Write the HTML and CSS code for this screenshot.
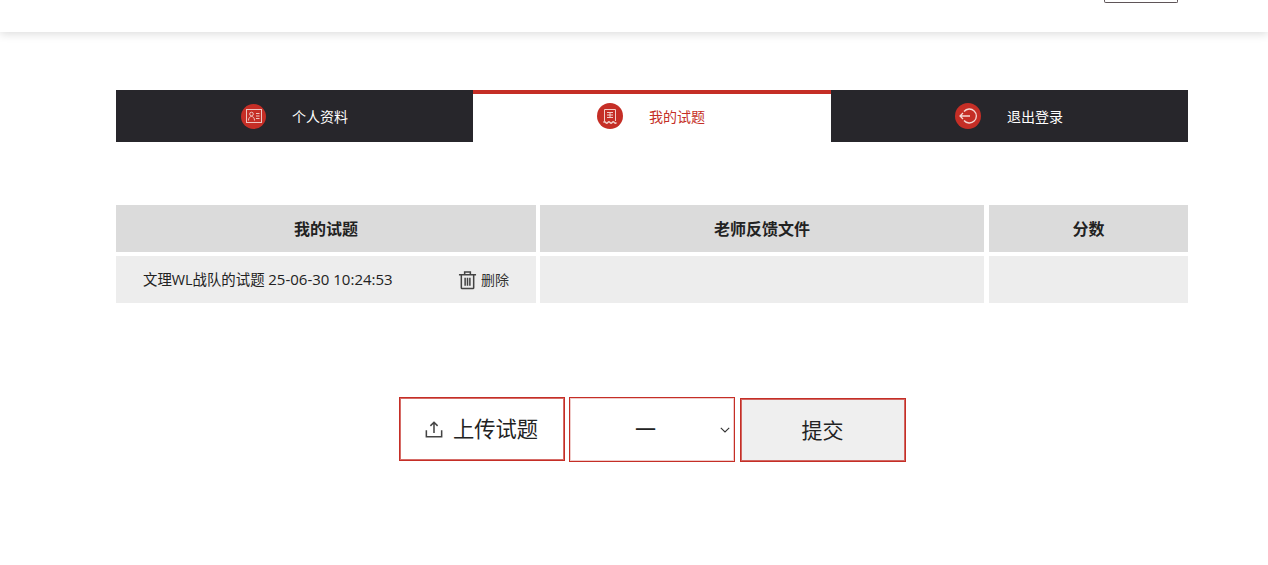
FILE: index.html
```html
<!DOCTYPE html>
<html lang="zh-CN">
<head>
<meta charset="utf-8">
<title>我的试题</title>
<link rel="stylesheet" href="styles.css">
</head>
<body>
<header class="topbar"><span class="top-btn"></span></header>
<main class="content">
  <nav class="tabs">
    <a class="tab">
      <span class="tab-icon"><svg viewBox="0 0 24 24" width="24" height="24"><g fill="none" stroke="#eec4bf" stroke-width="1"><rect x="4.500" y="5.500" width="15" height="13"/><circle cx="9.500" cy="10" r="1.800"/><path d="M6.500 16.500c0-2.500 1.200-4 3-4s3 1.500 3 4M14 9.500h3.500M14 12h3.500M14 14.500h3.500"/></g></svg></span>
      <span class="tab-label">个人资料</span>
    </a>
    <a class="tab tab-active">
      <span class="tab-icon tab-icon-big"><svg viewBox="0 0 26 26" width="26" height="26"><g fill="none" stroke="#f2cfca" stroke-width="1"><path d="M7.500 18V6.500h11V18M10 9.500h6M10 12h6M10 14.500h6M13 9.500v5"/><path d="M6.500 19.500q1.080-1.500 2.160 0t2.160 0 2.160 0 2.160 0 2.160 0 2.160 0" stroke-width="1.300"/></g></svg></span>
      <span class="tab-label">我的试题</span>
    </a>
    <a class="tab tab-last">
      <span class="tab-icon tab-icon-big"><svg viewBox="0 0 26 26" width="26" height="26"><g fill="none" stroke="#f5d9d5" stroke-width="1.300"><path d="M9 8.500a7 7 0 1 1 0 9"/><path d="M5 13h10M8 10l-3 3 3 3"/></g></svg></span>
      <span class="tab-label">退出登录</span>
    </a>
  </nav>

  <table class="grid">
    <colgroup><col class="col-a"><col class="col-b"><col class="col-c"></colgroup>
    <thead>
      <tr><th>我的试题</th><th>老师反馈文件</th><th class="cell-last">分数</th></tr>
    </thead>
    <tbody>
      <tr>
        <td>
          <div class="file-row">
            <span class="file-name">文理WL战队的试题 <span class="file-date">25-06-30 10:24:53</span></span>
            <a class="del">
              <svg viewBox="0 0 20 20" width="19" height="20"><g fill="none" stroke="#444" stroke-width="1.600"><path d="M1 4.500h18M7 4.500V1.500h6v3M3.500 4.500v13.700a.8.8 0 0 0 .8.8h11.400a.8.800 0 0 0 .8-.8V4.500M7.500 7.500v8.500M10 7.500v8.500M12.500 7.500v8.500"/></g></svg>
              <span class="del-label">删除</span>
            </a>
          </div>
        </td>
        <td></td>
        <td class="cell-last"></td>
      </tr>
    </tbody>
  </table>

  <div class="actions">
    <label class="btn btn-upload">
      <svg viewBox="0 0 20 20" width="18" height="18"><g fill="none" stroke="#444" stroke-width="1.700"><path d="M1.500 11.500v7h17v-7M10 14.500V2.500M6 6.500l4-4 4 4"/></g></svg>
      <span class="upload-label">上传试题</span>
    </label>
    <div class="btn btn-select">
      <span class="select-value">一</span>
      <svg class="chev" viewBox="0 0 10 6" width="10" height="6"><path d="M.8.800 5 5 9.200.800" fill="none" stroke="#333" stroke-width="1.100"/></svg>
    </div>
    <button class="btn btn-submit" type="button">提交</button>
  </div>
</main>
</body>
</html>
```
FILE: styles.css
```css
* { box-sizing: border-box; }
html, body { margin: 0; padding: 0; }
body {
  background: #fff;
  color: #222;
  font-family: "Open Sans", "Noto Sans CJK SC", sans-serif;
  font-size: 14px;
  height: 565px;
  overflow: hidden;
}
.topbar {
  height: 32px;
  display: flex;
  justify-content: flex-end;
  align-items: flex-start;
  padding-right: 90px;
  background: #fff;
  box-shadow: 0 2px 10px rgba(0, 0, 0, 0.14);
}
.top-btn {
  width: 74px;
  height: 3px;
  border: 1px solid #5f5558;
  border-top: 0;
  border-radius: 0 0 2px 2px;
}
.content {
  width: 1072px;
  margin: 58px 0 0 116px;
}
.tabs {
  display: grid;
  grid-template-columns: 357px 358px 357px;
  height: 52px;
}
.tab {
  display: flex;
  align-items: center;
  background: #27262b;
  color: #fff;
  padding-left: 125px;
  gap: 26px;
  font-size: 14px;
}
.tab-last { padding-left: 124px; }
.tab-active {
  background: #fff;
  color: #c52e26;
  border-top: 4px solid #c52e26;
  padding-left: 124px;
}
.tab-icon {
  width: 25px;
  height: 25px;
  border-radius: 50%;
  background: #c52e26;
  display: flex;
  align-items: center;
  justify-content: center;
  flex: none;
}
.tab-icon-big { width: 26px; height: 26px; }
.tab-label { line-height: 20px; margin-top: 2px; }
.tab-active .tab-icon { margin-top: -4px; }
.tab-active .tab-label { margin-top: -3px; }
.grid {
  width: 1080px;
  margin: 59px 0 0 -4px;
  border-collapse: separate;
  border-spacing: 4px;
  table-layout: fixed;
}
.col-a { width: 420px; }
.col-b { width: 444px; }
.col-c { width: 200px; }
.grid th {
  height: 47px;
  padding: 0 0 2px;
  background: #dbdbdb;
  font-size: 16px;
  font-weight: 700;
  color: #222;
  text-align: center;
}
.grid td {
  height: 47px;
  padding: 0;
  background: #ededed;
  font-size: 14px;
}
.grid .cell-last {
  border-left: 1px solid #fff;
  background-clip: padding-box;
}
.file-row {
  display: flex;
  align-items: center;
  justify-content: space-between;
  padding: 0 27px;
}
.file-name { font-size: 14.4px; margin-top: -2px; white-space: nowrap; }
.file-date { font-size: 15px; }
.del {
  display: flex;
  align-items: center;
  gap: 4px;
  color: #333;
}
.del-label { margin-top: -2px; }
.actions {
  display: flex;
  justify-content: center;
  align-items: flex-start;
  gap: 4px;
  margin-top: 90px;
}
.btn {
  width: 166px;
  height: 65px;
  border: 1px solid #c52e26;
  box-shadow: inset 0 0 0 1px rgba(197, 46, 38, 0.7);
  background: #fff;
  color: #222;
  font-family: inherit;
  font-size: 21px;
  line-height: 1;
  display: flex;
  align-items: center;
  justify-content: center;
  padding: 0;
}
.btn-upload { gap: 10px; height: 64px; }
.upload-label { font-size: 21.3px; }
.btn-select {
  position: relative;
  box-shadow: inset 0 0 0 1px rgba(197, 46, 38, 0.25);
}
.select-value { margin-right: 12px; }
.chev { position: absolute; right: 4px; top: 29px; }
.btn-submit { background: #efefef; margin-top: 1px; margin-left: 1px; height: 64px; }
```
